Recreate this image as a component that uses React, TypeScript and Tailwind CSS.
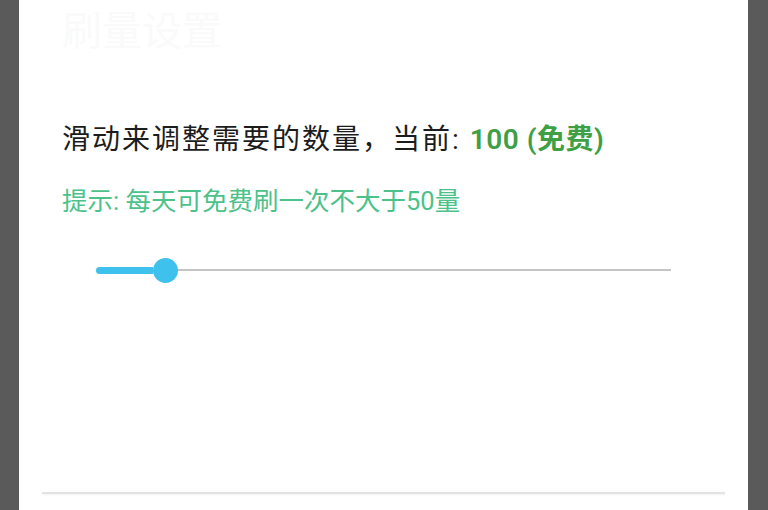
export default function App() {
  return (
    <div
      className="flex h-[510px] w-[768px] overflow-hidden bg-[#5a5a5a]"
      style={{ fontFamily: 'Roboto, "Noto Sans CJK SC", sans-serif' }}
    >
      <div className="w-[19px] shrink-0" />
      <div className="flex flex-1 flex-col bg-white">
        {/* faded title from the previous screen */}
        <div className="h-[60px] pl-[43px] pt-[8px] text-[40px] leading-[48px] text-[#fafafa]">
          刷量设置
        </div>

        <div className="mt-[62px] pl-[43px] text-[28px] leading-[36px] tracking-[2px] text-[#1c1c1c]">
          滑动来调整需要的数量，当前:{' '}
          <span className="font-semibold tracking-[0.5px] text-[#3f9f45]">100 (免费)</span>
        </div>

        <div className="mt-[27px] pl-[43px] text-[25.5px] leading-[32px] text-[#4cc28a]">
          提示: 每天可免费刷一次不大于50量
        </div>

        {/* slider */}
        <div className="mt-[40px] flex h-[26px] w-[575px] items-center ml-[77px]">
          <div className="h-[7px] w-[57px] rounded-l-sm bg-[#3fc1ee]" />
          <div className="h-[25px] w-[25px] shrink-0 rounded-full bg-[#3fc1ee]" />
          <div className="h-[2px] flex-1 bg-[#c4c4c4]" />
        </div>

        <div className="flex-1" />
        <div className="mx-[23px] mb-[16px] h-[2px] bg-[#e3e3e3] shadow-[0_1px_2px_rgba(0,0,0,0.06)]" />
      </div>
      <div className="w-[20px] shrink-0" />
    </div>
  )
}
